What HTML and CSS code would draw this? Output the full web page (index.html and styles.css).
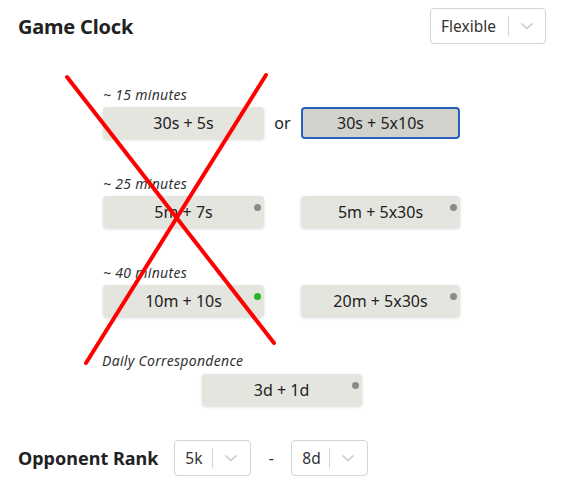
FILE: index.html
```html
<!DOCTYPE html>
<html>
<head>
<meta charset="utf-8">
<link rel="stylesheet" href="styles.css">
</head>
<body>
<div class="page">
  <div class="header">
    <h2 class="title">Game Clock</h2>
    <div class="select select-wide">
      <span class="select-value">Flexible</span>
      <span class="select-sep"></span>
      <svg class="chev" width="14" height="8" viewBox="0 0 14 8"><path d="M1.5 1.5 L7 6.5 L12.5 1.5" fill="none" stroke="#c8c8c8" stroke-width="1.6"/></svg>
    </div>
  </div>

  <div class="clocks">
    <div class="group">
      <div class="label">~ 15 minutes</div>
      <div class="row">
        <button class="tbtn">30s + 5s</button>
        <span class="or">or</span>
        <button class="tbtn selected">30s + 5x10s</button>
      </div>
    </div>
    <div class="group">
      <div class="label">~ 25 minutes</div>
      <div class="row">
        <button class="tbtn">5m + 7s<i class="dot"></i></button>
        <span class="or"></span>
        <button class="tbtn">5m + 5x30s<i class="dot"></i></button>
      </div>
    </div>
    <div class="group">
      <div class="label">~ 40 minutes</div>
      <div class="row">
        <button class="tbtn">10m + 10s<i class="dot green"></i></button>
        <span class="or"></span>
        <button class="tbtn">20m + 5x30s<i class="dot"></i></button>
      </div>
    </div>
    <div class="group daily">
      <div class="label">Daily Correspondence</div>
      <div class="row center">
        <button class="tbtn">3d + 1d<i class="dot"></i></button>
      </div>
    </div>
  </div>

  <div class="rank">
    <h3 class="rank-title">Opponent Rank</h3>
    <div class="select select-small">
      <span class="select-value">5k</span>
      <span class="select-sep"></span>
      <svg class="chev" width="14" height="8" viewBox="0 0 14 8"><path d="M1.5 1.5 L7 6.5 L12.5 1.5" fill="none" stroke="#c8c8c8" stroke-width="1.6"/></svg>
    </div>
    <span class="dash">-</span>
    <div class="select select-small">
      <span class="select-value">8d</span>
      <span class="select-sep"></span>
      <svg class="chev" width="14" height="8" viewBox="0 0 14 8"><path d="M1.5 1.5 L7 6.5 L12.5 1.5" fill="none" stroke="#c8c8c8" stroke-width="1.6"/></svg>
    </div>
  </div>

  <svg class="cross" width="566" height="492" viewBox="0 0 566 492">
    <line x1="67" y1="77" x2="274" y2="343" stroke="#ff0000" stroke-width="4" stroke-linecap="round"/>
    <line x1="266" y1="75" x2="86" y2="363" stroke="#ff0000" stroke-width="4" stroke-linecap="round"/>
  </svg>
</div>
</body>
</html>
```

FILE: styles.css
```css
* { box-sizing: border-box; }
html, body { margin: 0; padding: 0; background: #fff; }
body {
  font-family: "Noto Sans", "Open Sans", sans-serif;
  color: #222;
}
.page {
  position: relative;
  width: 566px;
  height: 492px;
  overflow: hidden;
}
.header {
  display: flex;
  justify-content: space-between;
  align-items: center;
  padding: 8px 20px 0 18px;
}
.title {
  margin: 0;
  font-size: 20px;
  font-weight: 700;
  letter-spacing: -0.2px;
}
.select {
  display: flex;
  align-items: center;
  height: 36px;
  border: 1px solid #d4d4d4;
  border-radius: 4px;
  background: #fff;
  font-size: 15.5px;
  color: #333;
}
.select-wide { width: 116px; padding-left: 10px; }
.select-small { width: 77px; padding-left: 10px; }
.select-value { flex: 0 0 auto; }
.select-wide .select-value { width: 67px; }
.select-small .select-value { width: 27px; }
.select-sep {
  width: 1px;
  height: 20px;
  background: #d4d4d4;
  margin-right: 11px;
}
.chev { display: block; }

.clocks {
  padding: 43px 0 0 103px;
}
.group { margin-bottom: 37px; }
.group:nth-child(3) { margin-bottom: 36px; }
.group.daily { margin-bottom: 0; }
.label {
  font-size: 14px;
  font-style: italic;
  letter-spacing: 0.3px;
  line-height: 16px;
  height: 16px;
  color: #333;
  margin-bottom: 4px;
}
.daily .label { margin-left: -1px; margin-bottom: 5px; }
.row {
  display: grid;
  grid-template-columns: 161px 37px 159px;
  align-items: center;
}
.row.center {
  display: flex;
  width: 357px;
  justify-content: center;
}
.tbtn {
  position: relative;
  height: 32px;
  border: 0;
  border-radius: 4px;
  background: #e5e5e0;
  box-shadow: 0 1px 3px rgba(0,0,0,0.16);
  font-family: inherit;
  font-size: 16px;
  color: #222;
  padding: 0;
  text-align: center;
}
.row.center .tbtn { width: 160px; }
.tbtn.selected {
  background: #d2d2cd;
  border: 2px solid #2561bd;
  box-shadow: none;
}
.or {
  text-align: center;
  font-size: 16px;
  color: #222;
}
.dot {
  position: absolute;
  top: 8px;
  right: 3px;
  width: 7px;
  height: 7px;
  border-radius: 50%;
  background: #8a8a8a;
}
.dot.green { background: #27b427; }

.rank {
  display: flex;
  align-items: center;
  padding: 34px 0 0 18px;
}
.rank-title {
  margin: 0 16px 0 0;
  font-size: 18px;
  font-weight: 700;
}
.dash {
  width: 40px;
  text-align: center;
  font-size: 16px;
}
.cross {
  position: absolute;
  top: 0;
  left: 0;
  pointer-events: none;
}
```
